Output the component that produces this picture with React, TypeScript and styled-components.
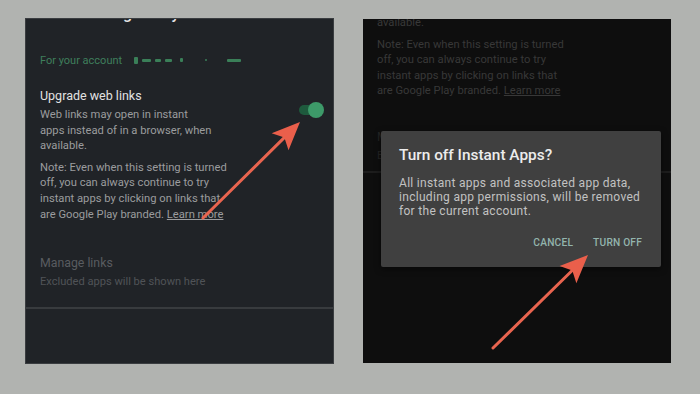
import React, { FC } from "react";
import styled, { createGlobalStyle } from "styled-components";

const GlobalStyle = createGlobalStyle`
    html, body {
        margin: 0;
        padding: 0;
        background: #b1b3b0;
        font-family: Roboto, "Liberation Sans", Arial, sans-serif;
    }
`;

const Page = styled.div`
    width: 700px;
    height: 394px;
    display: flex;
    gap: 30px;
    padding: 19px 0 0 26px;
    box-sizing: border-box;
`;

type PanelProps = {
    dark?: boolean
}

const Panel = styled.div<PanelProps>`
    position: relative;
    overflow: hidden;
    width: ${({ dark }) => dark ? "308px" : "307px"};
    height: 344px;
    background: ${({ dark }) => dark ? "#0e0e0e" : "#202327"};
    box-shadow: ${({ dark }) => dark ? "none" : "0 0 0 1px #3a3d40"};
    display: flex;
    flex-direction: column;
`;

const Content = styled.div`
    padding: 0 9px 0 14px;
    display: flex;
    flex-direction: column;
`;

const ClippedTitle = styled.div`
    margin-top: -15px;
    height: 20px;
    padding-left: 54px;
    font-size: 16px;
    line-height: 20px;
    font-weight: 500;
    color: #e6e6e6;
    white-space: nowrap;
`;

const AccountRow = styled.div`
    margin-top: 29px;
    display: flex;
    align-items: center;
    gap: 12px;
    height: 14px;
    font-size: 11px;
    color: #3f7f5c;
`;

const Blur = styled.div`
    display: flex;
    align-items: center;
    gap: 4px;
`;

type DashProps = {
    w: number,
    h?: number,
    ml?: number
}

const Dash = styled.span<DashProps>`
    display: block;
    width: ${({ w }) => w}px;
    height: ${({ h }) => h ?? 3}px;
    margin-left: ${({ ml }) => ml ?? 0}px;
    background: #3f8f62;
    border-radius: 1px;
    opacity: 0.85;
`;

const SettingRow = styled.div`
    margin-top: 21px;
    display: flex;
    justify-content: space-between;
`;

const TextColumn = styled.div`
    display: flex;
    flex-direction: column;
`;

const SettingTitle = styled.div`
    font-size: 12.5px;
    line-height: 16px;
    color: #e2e2e2;
`;

type ParaProps = {
    gapTop: number,
    faint?: boolean
}

const Para = styled.div<ParaProps>`
    margin-top: ${({ gapTop }) => gapTop}px;
    font-size: 11.2px;
    line-height: 15.6px;
    color: ${({ faint }) => faint ? "#383838" : "#9b9c9e"};
    white-space: nowrap;
`;

const LearnMore = styled.span`
    text-decoration: underline;
`;

const Toggle = styled.div`
    position: relative;
    margin-top: 14px;
    width: 25px;
    height: 16px;
    flex-shrink: 0;
`;

const Track = styled.div`
    position: absolute;
    left: 0;
    top: 3px;
    width: 22px;
    height: 10px;
    border-radius: 5px;
    background: #1e5a3d;
`;

const Thumb = styled.div`
    position: absolute;
    right: 0;
    top: 0;
    width: 16px;
    height: 16px;
    border-radius: 50%;
    background: #3d9a69;
`;

type MutedProps = {
    gapTop: number,
    small?: boolean,
    faint?: boolean
}

const Muted = styled.div<MutedProps>`
    margin-top: ${({ gapTop }) => gapTop}px;
    font-size: ${({ small }) => small ? "11.1px" : "12.3px"};
    line-height: ${({ small }) => small ? "14px" : "16px"};
    color: ${({ faint, small }) => faint ? "#252525" : small ? "#505357" : "#595c60"};
    white-space: nowrap;
`;

type DividerProps = {
    gapTop: number,
    faint?: boolean
}

const Divider = styled.div<DividerProps>`
    margin-top: ${({ gapTop }) => gapTop}px;
    height: 2px;
    background: ${({ faint }) => faint ? "#1d1d1d" : "#383b3e"};
`;

const Dialog = styled.div`
    position: absolute;
    left: 18px;
    top: 112px;
    width: 280px;
    height: 136px;
    box-sizing: border-box;
    padding: 15px 19px 0 18px;
    background: #404040;
    border-radius: 2px;
    box-shadow: 0 2px 6px rgba(0, 0, 0, 0.5);
    display: flex;
    flex-direction: column;
`;

const DialogTitle = styled.div`
    font-size: 15.4px;
    line-height: 18px;
    font-weight: 500;
    color: #ececec;
`;

const DialogBody = styled.div`
    margin-top: 12px;
    font-size: 12px;
    letter-spacing: 0.3px;
    line-height: 14px;
    color: #c2c2c2;
    white-space: nowrap;
`;

const Actions = styled.div`
    margin-top: 19px;
    display: flex;
    justify-content: flex-end;
    gap: 20px;
`;

const ActionButton = styled.span`
    font-size: 10.2px;
    line-height: 12px;
    font-weight: 500;
    letter-spacing: 0.2px;
    color: #93b4ad;
`;

const Overlay = styled.svg`
    position: absolute;
    left: 0;
    top: 0;
    pointer-events: none;
`;

type ArrowProps = {
    tail: [number, number],
    tip: [number, number]
}

const Arrow: FC<ArrowProps> = ({ tail, tip }) => {
    const dx = tip[0] - tail[0];
    const dy = tip[1] - tail[1];
    const len = Math.hypot(dx, dy);
    const ux = dx / len;
    const uy = dy / len;
    const bx = tip[0] - ux * 28;
    const by = tip[1] - uy * 28;
    const px = -uy * 12;
    const py = ux * 12;
    const head = `${tip[0]},${tip[1]} ${bx + px},${by + py} ${bx + ux * 6},${by + uy * 6} ${bx - px},${by - py}`;

    return (
        <Overlay width="308" height="344">
            <line
                x1={tail[0]}
                y1={tail[1]}
                x2={bx + ux * 8}
                y2={by + uy * 8}
                stroke="#e8644f"
                strokeWidth={3}
                strokeLinecap="round"
            />
            <polygon points={head} fill="#ea5f4b" strokeLinejoin="round" />
        </Overlay>
    );
};

const App: FC = () => (
    <>
        <GlobalStyle />
        <Page>
            <Panel>
                <Content>
                    <ClippedTitle>Google Play Instant</ClippedTitle>
                    <AccountRow>
                        <span>For your account</span>
                        <Blur>
                            <Dash w={4} h={7} />
                            <Dash w={9} />
                            <Dash w={6} />
                            <Dash w={7} />
                            <Dash w={3} h={4} ml={4} />
                            <Dash w={2} h={2} ml={18} />
                            <Dash w={14} ml={16} />
                        </Blur>
                    </AccountRow>
                    <SettingRow>
                        <TextColumn>
                            <SettingTitle>Upgrade web links</SettingTitle>
                            <Para gapTop={3}>
                                Web links may open in instant<br />
                                apps instead of in a browser, when<br />
                                available.
                            </Para>
                            <Para gapTop={6}>
                                Note: Even when this setting is turned<br />
                                off, you can always continue to try<br />
                                instant apps by clicking on links that<br />
                                are Google Play branded. <LearnMore>Learn more</LearnMore>
                            </Para>
                        </TextColumn>
                        <Toggle>
                            <Track />
                            <Thumb />
                        </Toggle>
                    </SettingRow>
                    <Muted gapTop={33}>Manage links</Muted>
                    <Muted gapTop={4} small>Excluded apps will be shown here</Muted>
                </Content>
                <Divider gapTop={18} />
                <Arrow tail={[177, 199]} tip={[274, 103]} />
            </Panel>
            <Panel dark>
                <Content>
                    <Para gapTop={-4} faint>available.</Para>
                    <Para gapTop={6} faint>
                        Note: Even when this setting is turned<br />
                        off, you can always continue to try<br />
                        instant apps by clicking on links that<br />
                        are Google Play branded. <LearnMore>Learn more</LearnMore>
                    </Para>
                    <Muted gapTop={30} faint>Manage links</Muted>
                    <Muted gapTop={4} small faint>Excluded apps will be shown here</Muted>
                </Content>
                <Divider gapTop={8} faint />
                <Dialog>
                    <DialogTitle>Turn off Instant Apps?</DialogTitle>
                    <DialogBody>
                        All instant apps and associated app data,<br />
                        including app permissions, will be removed<br />
                        for the current account.
                    </DialogBody>
                    <Actions>
                        <ActionButton>CANCEL</ActionButton>
                        <ActionButton>TURN OFF</ActionButton>
                    </Actions>
                </Dialog>
                <Arrow tail={[130, 329]} tip={[225, 236]} />
            </Panel>
        </Page>
    </>
);

export default App;
